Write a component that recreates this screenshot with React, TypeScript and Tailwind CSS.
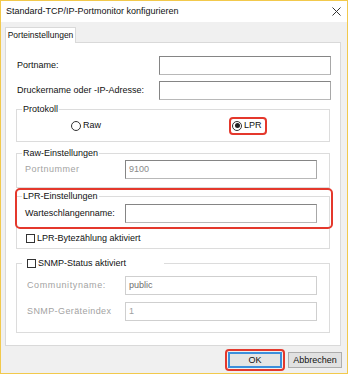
import type { ReactNode } from "react";

const FONT = "font-['Liberation_Sans','Arial',sans-serif]";

function TextBox({
  value,
  disabled,
  className,
}: {
  value?: string;
  disabled?: boolean;
  className: string;
}) {
  return (
    <div
      className={`flex h-[19px] items-center bg-white pl-[3px] text-[9px] ${
        disabled
          ? "border border-[#cfcfcf] text-[#6d6d6d]"
          : "border border-[#858585] border-b-[#b8b8b8] border-r-[#a8a8a8] text-[#8a8a8a]"
      } ${className}`}
    >
      {value}
    </div>
  );
}

function Group({
  title,
  className,
  children,
}: {
  title: ReactNode;
  className: string;
  children: ReactNode;
}) {
  return (
    <div
      className={`relative ml-[10px] w-[314px] border border-[#dcdcdc] ${className}`}
    >
      <div className="absolute left-[5px] top-[-7px] flex h-[12px] items-center bg-white px-[1px] text-[9px] leading-none text-[#111111]">
        {title}
      </div>
      {children}
    </div>
  );
}

function Radio({ label, on }: { label: string; on?: boolean }) {
  return (
    <span className="relative flex items-center gap-[2px] text-[9px] leading-none text-[#111111]">
      <span className="flex size-[10px] items-center justify-center rounded-full border border-[#333333] bg-white">
        {on ? <span className="size-[5px] rounded-full bg-[#222222]" /> : null}
      </span>
      {label}
      {on ? (
        <span className="absolute left-[-3px] top-[-4px] h-[18px] w-[38px] rounded-[4px] border-2 border-[#e4382c]" />
      ) : null}
    </span>
  );
}

function Check({ label }: { label: string }) {
  return (
    <span className="flex items-center gap-[2px] text-[9px] leading-none text-[#111111]">
      <span className="size-[9px] border border-[#333333] bg-white" />
      {label}
    </span>
  );
}

export default function App() {
  return (
    <div
      className={`flex h-[374px] w-[348px] flex-col border border-[#f2c94c] bg-[#f0f0f0] ${FONT}`}
    >
      <div className="flex h-[21px] items-center justify-between bg-white pl-[5px] pr-[6px]">
        <span className="text-[9px] leading-none text-[#111111]">
          Standard-TCP/IP-Portmonitor konfigurieren
        </span>
        <svg width="9" height="9" viewBox="0 0 9 9" aria-hidden>
          <path d="M0.5 0.5 L8.5 8.5 M8.5 0.5 L0.5 8.5" stroke="#333" strokeWidth="1" />
        </svg>
      </div>

      <div className="relative z-10 ml-[4px] mt-[5px] flex h-[16px] w-[71px] items-center justify-center border-x border-t border-[#d9d9d9] bg-white text-[8.5px] leading-none text-[#111111]">
        Porteinstellungen
      </div>

      <div className="-mt-px ml-[4px] flex h-[304px] w-[336px] flex-col border border-[#d9d9d9] bg-white">
        <div className="mt-[13px] flex items-center pl-[11px]">
          <span className="w-[142px] text-[9px] leading-none text-[#111111]">Portname:</span>
          <TextBox className="w-[172px]" />
        </div>
        <div className="mt-[6px] flex items-center pl-[11px]">
          <span className="w-[142px] text-[9px] leading-none text-[#111111]">
            Druckername oder -IP-Adresse:
          </span>
          <TextBox className="w-[172px]" />
        </div>

        <Group title="Protokoll" className="mt-[9px] h-[33px]">
          <div className="flex h-full items-center pl-[54px]">
            <div className="w-[161px]">
              <Radio label="Raw" />
            </div>
            <Radio label="LPR" on />
          </div>
        </Group>

        <Group title="Raw-Einstellungen" className="mt-[11px] pb-[8px] pt-[6px]">
          <div className="flex items-center pl-[8px]">
            <span className="w-[100px] text-[9px] leading-none tracking-[0.5px] text-[#a3a3a3]">
              Portnummer
            </span>
            <TextBox value="9100" className="w-[192px]" />
          </div>
        </Group>

        <Group title="LPR-Einstellungen" className="mt-[8px] pb-[5px] pt-[7px]">
          <div className="flex items-center pl-[8px]">
            <span className="w-[100px] text-[9px] leading-none text-[#111111]">
              Warteschlangenname:
            </span>
            <TextBox className="w-[192px]" />
          </div>
          <div className="mt-[11px] pl-[9px]">
            <Check label="LPR-Bytezählung aktiviert" />
          </div>
          <span className="absolute left-[-2px] top-[-9px] h-[41px] w-[318px] rounded-[5px] border-2 border-[#e4382c]" />
        </Group>

        <Group
          title={
            <span className="flex w-[140px] pl-[4px]">
              <Check label="SNMP-Status aktiviert" />
            </span>
          }
          className="mt-[14px] pb-[11px] pt-[12px]"
        >
          <div className="flex items-center pl-[10px]">
            <span className="w-[98px] text-[9px] leading-none tracking-[0.6px] text-[#a3a3a3]">
              Communityname:
            </span>
            <TextBox value="public" disabled className="w-[192px]" />
          </div>
          <div className="mt-[7px] flex items-center pl-[10px]">
            <span className="w-[98px] text-[9px] leading-none tracking-[0.4px] text-[#a3a3a3]">
              SNMP-Geräteindex
            </span>
            <TextBox value="1" disabled className="w-[192px] text-[#a0a0a0]" />
          </div>
        </Group>
      </div>

      <div className="mt-[6px] flex justify-end gap-[6px] pr-[5px]">
        <div className="relative">
          <button
            type="button"
            className="flex h-[16px] w-[54px] items-center justify-center border-2 border-[#3c8fdc] bg-[#e5e5e5] text-[9px] leading-none text-[#111111]"
          >
            OK
          </button>
          <span className="absolute left-[-3px] top-[-3px] h-[22px] w-[60px] rounded-[4px] border-2 border-[#e4382c]" />
        </div>
        <button
          type="button"
          className="flex h-[16px] w-[54px] items-center justify-center border border-[#adadad] bg-[#e1e1e1] text-[9px] leading-none text-[#111111]"
        >
          Abbrechen
        </button>
      </div>
    </div>
  );
}
